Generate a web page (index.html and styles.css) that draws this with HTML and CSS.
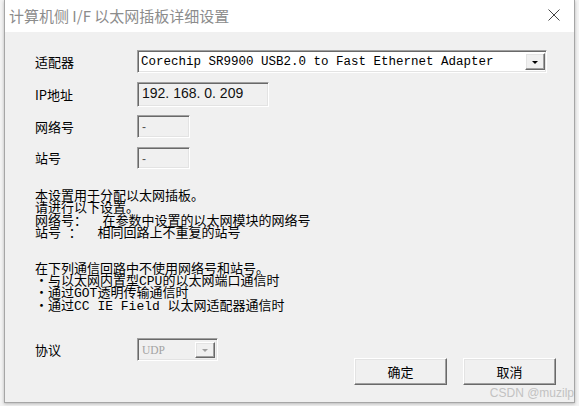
FILE: index.html
```html
<!DOCTYPE html>
<html lang="zh-CN">
<head>
<meta charset="utf-8">
<title>计算机侧 I/F 以太网插板详细设置</title>
<link rel="stylesheet" href="styles.css">
</head>
<body>
<div class="screen">
  <div class="dialog">
    <div class="titlebar">
      <span class="title">计算机侧 I/F 以太网插板详细设置</span>
      <svg class="close" width="12" height="12" viewBox="0 0 12 12"><path d="M0.5 0.5 L11.5 11.5 M11.5 0.5 L0.5 11.5" stroke="#444" stroke-width="1" fill="none"/></svg>
    </div>
    <div class="content">
      <div class="form">
        <div class="label">适配器</div>
        <div class="field sunken combo adapter">
          <span class="combo-text">Corechip SR9900 USB2.0 to Fast Ethernet Adapter</span>
          <span class="drop"><i class="tri"></i></span>
        </div>

        <div class="label">IP地址</div>
        <div class="field sunken gray ip"><span class="ip-text">192. 168. 0. 209</span></div>

        <div class="label">网络号</div>
        <div class="field sunken gray small net"><span class="dash">-</span></div>

        <div class="label">站号</div>
        <div class="field sunken gray small station"><span class="dash">-</span></div>
      </div>

      <div class="desc">
        <p class="para">本设置用于分配以太网插板。
请进行以下设置。
网络号：  在参数中设置的以太网模块的网络号
站号 ：  相同回路上不重复的站号</p>
        <p class="para second">在下列通信回路中不使用网络号和站号。
・与以太网内置型CPU的以太网端口通信时
・通过GOT透明传输通信时
・通过CC IE Field 以太网适配器通信时</p>
      </div>

      <div class="bottom">
        <div class="proto">
          <div class="label">协议</div>
          <div class="sunken gray combo udp">
            <span class="udp-text">UDP</span>
            <span class="drop small-drop"><i class="tri disabled"></i></span>
          </div>
        </div>
        <div class="buttons">
          <div class="btn">确定</div>
          <div class="btn">取消</div>
        </div>
      </div>
    </div>
    <div class="watermark">CSDN @muzilp</div>
  </div>
</div>
</body>
</html>
```

FILE: styles.css
```css
* { box-sizing: border-box; }

html, body {
  margin: 0;
  padding: 0;
}

body {
  width: 579px;
  height: 406px;
  overflow: hidden;
  background: #e9e9e9;
  font-family: "Noto Sans CJK SC", sans-serif;
}

.screen {
  padding-left: 4px;
  height: 406px;
  background: #f3f3f3;
}

.dialog {
  position: relative;
  width: 571px;
  height: 403px;
  background: #f0f0f0;
  border: 1px solid #a6a6a6;
  border-top: none;
  box-shadow: 0 1px 3px rgba(0,0,0,0.25);
  display: flex;
  flex-direction: column;
}

.titlebar {
  height: 32px;
  background: #ffffff;
  display: flex;
  align-items: center;
  justify-content: space-between;
  padding-left: 4px;
  padding-right: 14px;
  flex: none;
}

.title {
  font-family: "Noto Sans CJK SC", sans-serif;
  font-size: 15px;
  color: #8c8c8c;
  line-height: 20px;
  margin-top: -1px;
}

.close {
  display: block;
  margin-top: -2px;
}

.content {
  padding-left: 30px;
  padding-top: 18px;
  display: flex;
  flex-direction: column;
}

.form {
  display: grid;
  grid-template-columns: 102px auto;
  align-items: center;
  justify-items: start;
  row-gap: 9px;
}

.label {
  font-family: "Noto Sans CJK SC", sans-serif;
  font-size: 13px;
  line-height: 16px;
  color: #000;
}

.sunken {
  border: 1px solid;
  border-color: #a0a0a0 #ffffff #ffffff #a0a0a0;
  box-shadow: inset 1px 1px 0 #696969, inset -1px -1px 0 #e3e3e3;
  display: flex;
  align-items: center;
}

.gray { background: #f0f0f0; }

.adapter {
  width: 410px;
  height: 23px;
  background: #ffffff;
  padding-left: 3px;
  padding-right: 1px;
  justify-content: space-between;
}

.combo-text {
  font-family: "Liberation Mono", monospace;
  font-size: 12.5px;
  color: #000;
  white-space: pre;
  line-height: 16px;
}

.drop {
  width: 20px;
  height: 17px;
  background: #f0f0f0;
  border: 1px solid;
  border-color: #ffffff #696969 #696969 #ffffff;
  box-shadow: inset -1px -1px 0 #a0a0a0, inset 1px 1px 0 #e3e3e3;
  display: flex;
  align-items: center;
  justify-content: center;
}

.tri {
  display: block;
  width: 0;
  height: 0;
  border-left: 3px solid transparent;
  border-right: 3px solid transparent;
  border-top: 3px solid #000;
  margin-top: 1px;
}

.tri.disabled { border-top-color: #a0a0a0; }

.ip {
  width: 132px;
  height: 25px;
  padding-left: 4px;
}

.ip-text {
  font-family: "Liberation Sans", Arial, sans-serif;
  font-size: 14px;
  color: #111;
  white-space: pre;
  line-height: 16px;
  margin-top: -3px;
}

.small {
  width: 53px;
  padding-left: 4px;
}

.net { height: 23px; margin-top: -1px; }
.station { height: 22px; }

.dash {
  font-family: "Liberation Sans", Arial, sans-serif;
  font-size: 12px;
  color: #555;
  line-height: 12px;
  margin-top: 1px;
}

.desc {
  margin-top: 22px;
}

.para {
  margin: 0;
  font-family: "Liberation Mono", "Noto Sans CJK SC", monospace;
  font-size: 13px;
  line-height: 12.4px;
  color: #000;
  white-space: pre;
}

.para.second { margin-top: 23px; }

.bottom {
  display: flex;
  align-items: flex-start;
  justify-content: space-between;
  padding-right: 18px;
  margin-top: 25px;
}

.proto {
  display: flex;
  align-items: center;
}

.proto .label { width: 102px; }

.udp {
  width: 81px;
  height: 23px;
  padding-left: 4px;
  padding-right: 2px;
  justify-content: space-between;
}

.udp-text {
  font-family: "Liberation Serif", serif;
  font-size: 11.5px;
  color: #a3a3a3;
  line-height: 14px;
}

.small-drop {
  width: 20px;
  height: 16px;
}

.buttons {
  display: flex;
  gap: 16px;
  margin-top: 20px;
}

.btn {
  width: 93px;
  height: 27px;
  background: #f0f0f0;
  border: 1px solid;
  border-color: #ffffff #696969 #696969 #ffffff;
  box-shadow: inset -1px -1px 0 #a0a0a0, inset 1px 1px 0 #e3e3e3;
  display: flex;
  align-items: center;
  justify-content: center;
  font-family: "Noto Sans CJK SC", sans-serif;
  font-size: 13px;
  color: #000;
  line-height: 16px;
}

.watermark {
  position: absolute;
  right: 0;
  bottom: 2px;
  font-family: "Liberation Sans", Arial, sans-serif;
  font-size: 12px;
  color: #c2c2c2;
  white-space: nowrap;
}
```
